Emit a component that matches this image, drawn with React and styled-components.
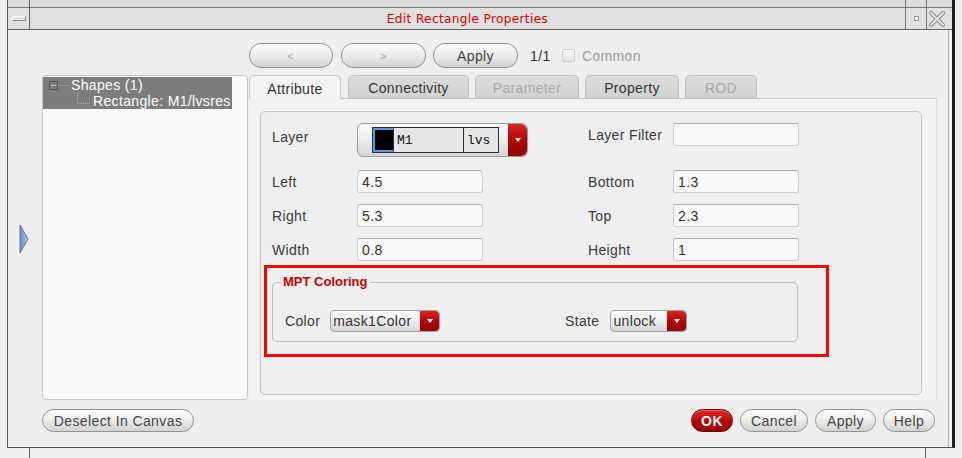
import styled, { createGlobalStyle } from 'styled-components'

const Global = createGlobalStyle`
  html, body { margin: 0; padding: 0; background: #f1f1f1; }
  body {
    font-family: "Liberation Sans", Arial, sans-serif;
    font-size: 14px;
    letter-spacing: 0.35px;
    color: #333;
  }
  * { box-sizing: border-box; }
`

const Page = styled.div`
  width: 962px;
  height: 458px;
  overflow: hidden;
  background: #efefef;
`

const Frame = styled.div`
  margin-left: 7px;
  width: 948px;
  height: 448px;
  display: flex;
  flex-direction: column;
  border-left: 1px solid #555;
  border-right: 3px solid #1e1e1e;
  border-bottom: 1px solid #555;
`

const BottomStrip = styled.div`
  display: flex;
  height: 10px;
`

const Tick = styled.span`
  width: 1px;
  height: 10px;
  background: #666;
  margin-left: ${({ $left }) => $left};
`

/* ---------- title bar ---------- */

const TitleBar = styled.div`
  display: flex;
  flex: none;
  height: 30px;
  border-bottom: 1px solid #666;
  background: linear-gradient(#dcdcdc 0 7px, #7a7a7a 7px 8px, #e0e0e0 8px);
`

const TitleBox = styled.div`
  width: ${({ $w }) => $w}px;
  flex: none;
  display: flex;
  align-items: center;
  justify-content: center;
  padding-top: 8px;
  ${({ $left }) => $left && 'border-left: 1px solid #777;'}
  ${({ $right }) => $right && 'border-right: 1px solid #666;'}
`

const MenuGlyph = styled.span`
  width: 14px;
  height: 5px;
  border: 1px solid #8a8a8a;
  border-top-color: #fafafa;
  border-left-color: #fafafa;
  background: #e4e4e4;
`

const MinGlyph = styled.span`
  width: 5px;
  height: 5px;
  border: 1px solid #999;
  background: #fafafa;
`

const Title = styled.div`
  flex: 1;
  display: flex;
  align-items: center;
  justify-content: center;
  padding-top: 8px;
  font-family: "DejaVu Sans", sans-serif;
  font-size: 12px;
  letter-spacing: 0.4px;
  color: #d60000;
`

/* ---------- body ---------- */

const Body = styled.div`
  flex: 1;
  display: flex;
  margin-right: 3px;
  border-right: 1px solid #b4b4b4;
  background: #eeeeee;
`

const ArrowStrip = styled.div`
  width: 34px;
  flex: none;
  display: flex;
  align-items: center;
  padding: 0 0 0 11px;
`

const Layout = styled.div`
  flex: 1;
  display: grid;
  grid-template-columns: 206px 1fr;
  grid-template-rows: 25px 325px 25px;
  column-gap: 1px;
  row-gap: 7px;
  padding: 13px 11px 0 0;
`

const NavRow = styled.div`
  grid-column: 2;
  grid-row: 1;
  display: flex;
  align-items: center;
`

const Pill = styled.button`
  width: ${({ $w }) => $w}px;
  height: ${({ $h }) => $h || 23}px;
  margin-right: ${({ $mr }) => $mr || 0}px;
  padding: 0;
  border-radius: 12px;
  border: 1px solid ${({ $ok }) => ($ok ? '#6a0000' : '#929292')};
  background: ${({ $ok }) =>
    $ok
      ? 'linear-gradient(#e02a2a, #b80808 50%, #980000)'
      : 'linear-gradient(#fdfdfd, #ededed 45%, #d3d3d3)'};
  box-shadow: inset 0 1px 0 ${({ $ok }) => ($ok ? '#f06060' : '#ffffff')};
  font-family: "Liberation Sans", Arial, sans-serif;
  font-size: ${({ $small }) => ($small ? 11 : 14)}px;
  font-weight: ${({ $ok }) => ($ok ? 'bold' : 'normal')};
  letter-spacing: 0.4px;
  color: ${({ $ok, $dim }) => ($ok ? '#fff' : $dim ? '#a8a8a8' : '#444')};
  display: flex;
  align-items: center;
  justify-content: center;
`

const Counter = styled.span`
  margin-left: 12px;
  width: 20px;
  color: #333;
`

const Check = styled.span`
  width: 13px;
  height: 13px;
  margin-left: 12px;
  margin-right: 7px;
  border: 1px solid #cfcfcf;
  border-radius: 2px;
  background: linear-gradient(#f6f6f6, #e4e4e4);
`

const Dim = styled.span`
  color: #9c9c9c;
`

/* ---------- tree ---------- */

const Tree = styled.div`
  grid-column: 1;
  grid-row: 2;
  background: #fafafa;
  border: 1px solid #c6c6c6;
  border-radius: 4px;
  padding: 1px 0 0 0;
`

const Highlight = styled.div`
  width: 189px;
  background: #7d7d7d;
  color: #fff;
`

const TreeRow = styled.div`
  display: flex;
  align-items: center;
  height: 16px;
  padding-left: ${({ $indent }) => $indent}px;
  line-height: 16px;
`

const Expander = styled.span`
  width: 9px;
  height: 9px;
  border: 1px solid #555;
  display: flex;
  align-items: center;
  justify-content: center;
  &::after {
    content: '';
    width: 5px;
    height: 1px;
    background: #bbb;
  }
`

const Dash = styled.span`
  width: 11px;
  margin-right: 2px;
  border-top: 1px dotted #aaa;
`

const Elbow = styled.span`
  width: 13px;
  height: 16px;
  margin-right: 3px;
  display: flex;
  &::before {
    content: '';
    width: 13px;
    height: 10px;
    border-left: 1px dotted #aaa;
    border-bottom: 1px dotted #aaa;
  }
`

/* ---------- tabs & panel ---------- */

const Main = styled.div`
  grid-column: 2;
  grid-row: 2;
  display: flex;
  flex-direction: column;
`

const Tabs = styled.div`
  display: flex;
  height: 23px;
  gap: 6px;
  flex: none;
`

const Tab = styled.div`
  width: ${({ $w }) => $w}px;
  margin-right: ${({ $mr }) => $mr || 0}px;
  height: ${({ $active }) => ($active ? 24 : 23)}px;
  position: relative;
  z-index: ${({ $active }) => ($active ? 1 : 0)};
  border: 1px solid ${({ $active }) => ($active ? '#c6c6c6' : '#c2c2c2')};
  border-bottom: none;
  border-radius: 5px 5px 0 0;
  padding-top: 2px;
  background: ${({ $active }) =>
    $active ? '#f3f3f3' : 'linear-gradient(#dcdcdc, #d2d2d2)'};
  color: ${({ $disabled }) => ($disabled ? '#a9a9a9' : '#333')};
  display: flex;
  align-items: center;
  justify-content: center;
`

const Pane = styled.div`
  flex: 1;
  display: flex;
  border-top: 1px solid #c4c4c4;
  border-right: 1px solid #dadada;
  background: #f2f2f2;
  padding: 12px 14px 5px 11px;
`

const Panel = styled.div`
  flex: 1;
  border: 1px solid #c2c2c2;
  border-radius: 5px;
  background: #efefef;
  padding: 11px 0 0 11px;
`

const Fields = styled.div`
  display: grid;
  grid-template-columns: 85px 231px 85px 126px;
  grid-template-rows: 36px 23px 23px 23px;
  row-gap: 11px;
`

const Label = styled.span`
  align-self: ${({ $top }) => ($top !== undefined ? 'start' : 'center')};
  margin-top: ${({ $top }) => $top || 0}px;
  color: #3a3a3a;
  line-height: 16px;
`

const Input = styled.div`
  width: 126px;
  height: 23px;
  align-self: ${({ $top }) => ($top ? 'start' : 'center')};
  border: 1px solid #cdcdcd;
  border-top-color: #ababab;
  border-radius: 3px;
  background: #f9f9f9;
  padding: 0 4px;
  display: flex;
  align-items: center;
  color: #333;
`

const LayerCombo = styled.div`
  width: 171px;
  height: 34px;
  align-self: start;
  display: flex;
  align-items: center;
  padding-left: 14px;
  border: 1px solid #9c9c9c;
  border-radius: 6px;
  background: linear-gradient(#fdfdfd, #ececec 50%, #d4d4d4);
  overflow: hidden;
`

const LayerBox = styled.div`
  display: flex;
  height: 26px;
  border: 1px solid #2e2e2e;
  background: #e6e6e6;
`

const Swatch = styled.span`
  width: 21px;
  background: #000;
  border: 2px solid #4c9be8;
  border-right: 1px solid #2e2e2e;
`

const MonoCell = styled.span`
  width: ${({ $w }) => $w}px;
  padding-left: 3px;
  display: flex;
  align-items: center;
  font-family: "Liberation Mono", "Courier New", monospace;
  font-size: 13px;
  letter-spacing: 0;
  color: #111;
  ${({ $sep }) => $sep && 'border-right: 1px solid #2e2e2e;'}
`

const RedArrow = styled.span`
  width: 19px;
  align-self: stretch;
  margin-left: auto;
  background: linear-gradient(#d82424, #b00606 55%, #940000);
  border-radius: 0 ${({ $r }) => $r}px ${({ $r }) => $r}px 0;
  display: flex;
  align-items: center;
  justify-content: center;
  &::after {
    content: '';
    border-left: 3px solid transparent;
    border-right: 3px solid transparent;
    border-top: 4px solid #fff;
  }
`

const RedBox = styled.div`
  width: 565px;
  height: 92px;
  margin: 4px 0 0 -8px;
  border: 3px solid #ff0000;
  padding: 6px 0 0 5px;
`

const Group = styled.fieldset`
  width: 526px;
  margin: 0;
  padding: 20px 12px 9px 12px;
  border: 1px solid #bdbdbd;
  border-radius: 5px;
`

const Legend = styled.legend`
  margin-left: -4px;
  padding: 0 2px;
  font-size: 13px;
  font-weight: bold;
  letter-spacing: 0;
  line-height: 16px;
  color: #cc0000;
`

const GroupRow = styled.div`
  display: flex;
  align-items: center;
`

const GroupItem = styled.div`
  width: ${({ $w }) => $w}px;
  display: flex;
  align-items: center;
  gap: ${({ $gap }) => $gap}px;
`

const Select = styled.div`
  width: ${({ $w }) => $w}px;
  height: 22px;
  display: flex;
  align-items: center;
  padding-left: 2px;
  border: 1px solid #a2a2a2;
  border-radius: 4px;
  background: linear-gradient(#fdfdfd, #eeeeee 50%, #d6d6d6);
  overflow: hidden;
  color: #333;
`

/* ---------- bottom ---------- */

const Deselect = styled.div`
  grid-column: 1;
  grid-row: 3;
  align-self: end;
`

const Actions = styled.div`
  grid-column: 2;
  grid-row: 3;
  align-self: end;
  display: flex;
  justify-content: flex-end;
  gap: 7px;
  padding-right: 2px;
`

function SideArrow() {
  return (
    <svg width="10" height="30" viewBox="0 0 10 30">
      <defs>
        <linearGradient id="ag" x1="0" x2="1" y1="0" y2="0">
          <stop offset="0" stopColor="#6e86c4" />
          <stop offset="1" stopColor="#b7c4e4" />
        </linearGradient>
      </defs>
      <polygon points="1,1 9,15 1,29" fill="url(#ag)" stroke="#5f73a8" strokeWidth="1" />
    </svg>
  )
}

function CloseIcon() {
  return (
    <svg width="16" height="16" viewBox="0 0 16 16">
      <path d="M2 2 L14 14 M14 2 L2 14" stroke="#8a8a8a" strokeWidth="4" strokeLinecap="square" />
      <path d="M2 2 L14 14 M14 2 L2 14" stroke="#e6e6e6" strokeWidth="2" strokeLinecap="square" />
    </svg>
  )
}

export default function App() {
  return (
    <Page>
      <Global />
      <Frame>
        <TitleBar>
          <TitleBox $w={22} $right>
            <MenuGlyph />
          </TitleBox>
          <Title>Edit Rectangle Properties</Title>
          <TitleBox $w={21} $left>
            <MinGlyph />
          </TitleBox>
          <TitleBox $w={21} $left>
            <CloseIcon />
          </TitleBox>
          <TitleBox $w={5} />
        </TitleBar>

        <Body>
          <ArrowStrip>
            <SideArrow />
          </ArrowStrip>

          <Layout>
            <NavRow>
              <Pill $w={84} $h={25} $mr={8} $dim $small>&lt;</Pill>
              <Pill $w={85} $h={25} $mr={7} $dim $small>&gt;</Pill>
              <Pill $w={85} $h={25}>Apply</Pill>
              <Counter>1/1</Counter>
              <Check />
              <Dim>Common</Dim>
            </NavRow>

            <Tree>
              <Highlight>
                <TreeRow $indent={6}>
                  <Expander />
                  <Dash />
                  Shapes (1)
                </TreeRow>
                <TreeRow $indent={34}>
                  <Elbow />
                  Rectangle: M1/lvsres
                </TreeRow>
              </Highlight>
            </Tree>

            <Main>
              <Tabs>
                <Tab $w={92} $mr={1} $active>Attribute</Tab>
                <Tab $w={121}>Connectivity</Tab>
                <Tab $w={104} $disabled>Parameter</Tab>
                <Tab $w={94}>Property</Tab>
                <Tab $w={72} $disabled>ROD</Tab>
              </Tabs>
              <Pane>
                <Panel>
                  <Fields>
                    <Label $top={6}>Layer</Label>
                    <LayerCombo>
                      <LayerBox>
                        <Swatch />
                        <MonoCell $w={70} $sep>M1</MonoCell>
                        <MonoCell $w={34}>lvs</MonoCell>
                      </LayerBox>
                      <RedArrow $r={6} />
                    </LayerCombo>
                    <Label $top={4}>Layer Filter</Label>
                    <Input $top />

                    <Label>Left</Label>
                    <Input>4.5</Input>
                    <Label>Bottom</Label>
                    <Input>1.3</Input>

                    <Label>Right</Label>
                    <Input>5.3</Input>
                    <Label>Top</Label>
                    <Input>2.3</Input>

                    <Label>Width</Label>
                    <Input>0.8</Input>
                    <Label>Height</Label>
                    <Input>1</Input>
                  </Fields>

                  <RedBox>
                    <Group>
                      <Legend>MPT Coloring</Legend>
                      <GroupRow>
                        <GroupItem $w={280} $gap={10}>
                          <Label>Color</Label>
                          <Select $w={110}>
                            mask1Color
                            <RedArrow $r={4} />
                          </Select>
                        </GroupItem>
                        <GroupItem $gap={11}>
                          <Label>State</Label>
                          <Select $w={77}>
                            unlock
                            <RedArrow $r={4} />
                          </Select>
                        </GroupItem>
                      </GroupRow>
                    </Group>
                  </RedBox>
                </Panel>
              </Pane>
            </Main>

            <Deselect>
              <Pill $w={152}>Deselect In Canvas</Pill>
            </Deselect>
            <Actions>
              <Pill $w={42} $ok>OK</Pill>
              <Pill $w={68}>Cancel</Pill>
              <Pill $w={61}>Apply</Pill>
              <Pill $w={52}>Help</Pill>
            </Actions>
          </Layout>
        </Body>
      </Frame>
      <BottomStrip>
        <Tick $left="29px" />
        <Tick $left="895px" />
      </BottomStrip>
    </Page>
  )
}
